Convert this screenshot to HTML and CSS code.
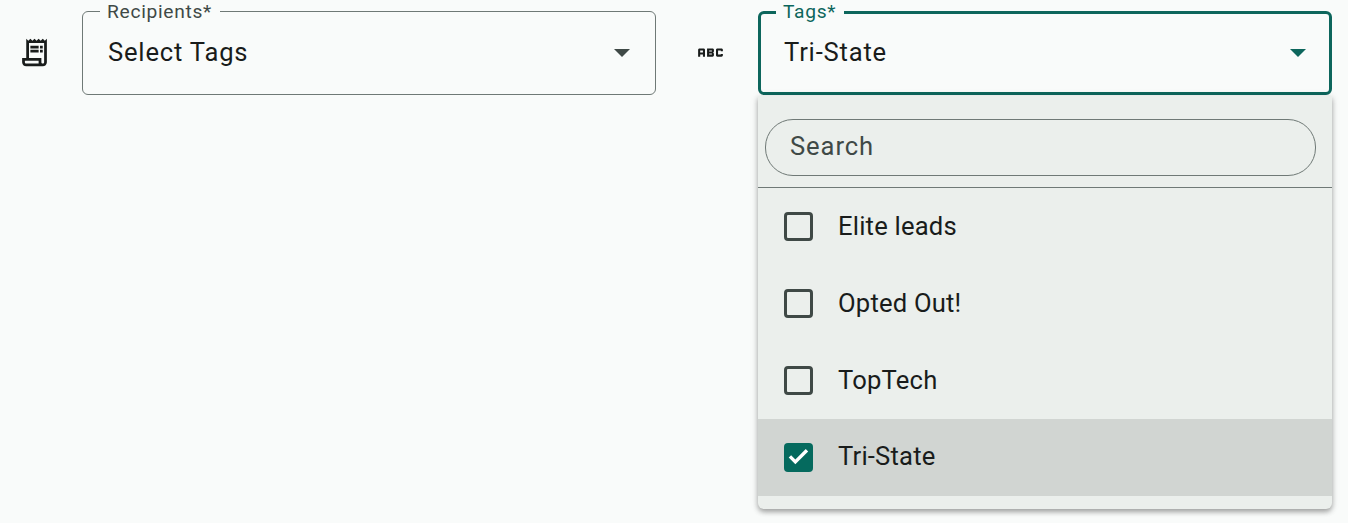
FILE: index.html
```html
<!DOCTYPE html>
<html lang="en">
<head>
<meta charset="utf-8">
<title>Tags</title>
<link rel="stylesheet" href="styles.css">
</head>
<body>
<main class="row">
  <svg class="lead-icon" viewBox="0 0 24 24" aria-hidden="true"><path d="M19.5 3.5 18 2l-1.5 1.5L15 2l-1.5 1.5L12 2l-1.5 1.5L9 2 7.5 3.5 6 2v14H3v3c0 1.66 1.34 3 3 3h12c1.66 0 3-1.34 3-3V2l-1.5 1.5zM15 20H6c-.55 0-1-.45-1-1v-1h10v2zm4-1c0 .55-.45 1-1 1s-1-.45-1-1v-3H8V5h11v14z"/><path d="M9 7h6v2H9zM16 7h2v2h-2zM9 10h6v2H9zM16 10h2v2h-2z"/></svg>
  <div class="field">
    <span class="field-label">Recipients*</span>
    <span class="field-value">Select Tags</span>
    <span class="arrow"></span>
  </div>
  <svg class="lead-icon abc" viewBox="0 0 24 24" aria-hidden="true"><path d="M21 11h-1.5v-.5h-2v3h2V13H21v1c0 .55-.45 1-1 1h-3c-.55 0-1-.45-1-1v-4c0-.55.45-1 1-1h3c.55 0 1 .45 1 1v1zM8 10v5H6.5v-1.5h-2V15H3v-5c0-.55.45-1 1-1h3c.55 0 1 .45 1 1zm-1.5.5h-2V12h2v-1.5zm7 1.5c.55 0 1 .45 1 1v1c0 .55-.45 1-1 1h-4V9h4c.55 0 1 .45 1 1v1c0 .55-.45 1-1 1zM11 10.5v.75h2v-.75h-2zm2 2.25h-2v.75h2v-.75z"/></svg>
  <div class="select-wrap">
    <div class="field focused">
      <span class="field-label">Tags*</span>
      <span class="field-value">Tri-State</span>
      <span class="arrow"></span>
    </div>
    <div class="menu">
      <div class="search-box"><div class="search"><span class="search-text">Search</span></div></div>
      <ul class="options">
        <li class="option"><span class="check"></span><span class="option-text">Elite leads</span></li>
        <li class="option"><span class="check"></span><span class="option-text">Opted Out!</span></li>
        <li class="option"><span class="check"></span><span class="option-text">TopTech</span></li>
        <li class="option selected"><span class="check checked"><svg viewBox="0 0 24 24" aria-hidden="true"><path d="M9.4 17.6 3.9 12.1l2-2 3.5 3.5 8.6-8.6 2 2z"/></svg></span><span class="option-text">Tri-State</span></li>
      </ul>
    </div>
  </div>
</main>
</body>
</html>
```
FILE: styles.css
```css
* { box-sizing: border-box; }
html, body { margin: 0; height: 100%; }
body {
  background: #f9fbfa;
  color: #191c1b;
  font-family: Roboto, sans-serif;
  overflow: hidden;
}
.row {
  display: flex;
  align-items: flex-start;
  padding: 11px 16px 0 18px;
}
.lead-icon {
  flex: none;
  width: 33px;
  height: 33px;
  margin-top: 25px;
  fill: #191c1b;
}
.abc { margin-left: 37.5px; margin-right: 31.5px; }
.field {
  position: relative;
  flex: none;
  display: flex;
  align-items: center;
  justify-content: space-between;
  width: 574px;
  height: 84px;
  margin-left: 31px;
  padding: 0 25px 0 25px;
  border: 1px solid #6f7976;
  border-radius: 6px;
}
.select-wrap .field { margin-left: 0; }
.field-label {
  position: absolute;
  top: -10px;
  left: 17px;
  padding: 0 8px 0 7px;
  background: #f9fbfa;
  color: #3f4946;
  font-size: 19.2px;
  line-height: 20px;
  letter-spacing: 0.7px;
}
.field-value {
  padding-bottom: 2px;
  font-size: 25.6px;
  letter-spacing: 0.8px;
}
.arrow {
  width: 0;
  height: 0;
  border-left: 8px solid transparent;
  border-right: 8px solid transparent;
  border-top: 8px solid #3f4946;
}
.focused {
  border: 3px solid #0d665c;
  padding: 0 23px 0 23px;
}
.focused .field-label {
  top: -12px;
  left: 15px;
  color: #0d665c;
}
.focused .arrow { border-top-color: #0d665c; }
.select-wrap {
  position: relative;
  flex: none;
  width: 574px;
}
.menu {
  position: absolute;
  top: 85px;
  left: 0;
  width: 574px;
  height: 413px;
  background: #ebefec;
  border-radius: 0 0 6px 6px;
  box-shadow: 0 3px 5px rgba(0, 0, 0, 0.3), 0 1px 8px rgba(0, 0, 0, 0.12);
}
.search-box {
  height: 92px;
  padding: 23px 16px 0 7px;
  border-bottom: 1px solid #6f7976;
}
.search {
  display: flex;
  align-items: center;
  height: 57px;
  padding-left: 24px;
  border: 1px solid #6f7976;
  border-radius: 28px;
  color: #3f4946;
  font-size: 25.6px;
  letter-spacing: 0.9px;
}
.search-text { padding-bottom: 4px; }
.options {
  margin: 0;
  padding: 0;
  list-style: none;
}
.option {
  display: flex;
  align-items: center;
  height: 77px;
  padding-left: 26px;
  font-size: 25.6px;
  letter-spacing: 0.2px;
}
.option-text { padding-bottom: 2px; }
.selected { background: #d1d5d2; }
.selected .option-text { padding-bottom: 4px; }
.check {
  flex: none;
  width: 29px;
  height: 29px;
  margin-right: 25px;
  border: 3px solid #3f4946;
  border-radius: 4px;
}
.checked {
  border: 0;
  background: #056a5e;
}
.checked svg {
  display: block;
  width: 29px;
  height: 29px;
  fill: #fff;
}
```
